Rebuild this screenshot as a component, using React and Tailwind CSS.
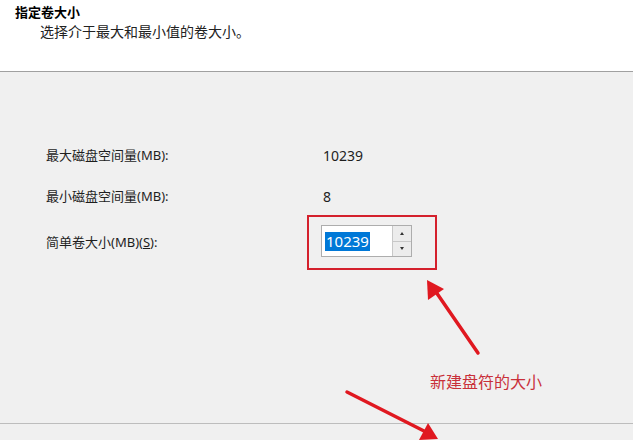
import React from "react";

const font = { fontFamily: '"Noto Sans", "Noto Sans CJK SC", sans-serif' };

const Row = ({ label, children, labelWidth = "w-[277px]", className = "" }) => (
  <div className={`flex items-center ${className}`}>
    <div className={`${labelWidth} shrink-0 text-[13px] text-[#1e1e1e]`}>{label}</div>
    {children}
  </div>
);

const Spinner = () => (
  <div className="flex h-[32px] w-[91px] border border-[#adadad] bg-white">
    <div className="flex flex-1 items-center pl-[3px]">
      <span className="bg-[#0078d7] px-[1px] text-[15px] leading-[19px] text-white">10239</span>
    </div>
    <div className="flex w-[19px] flex-col border-l border-[#c8c8c8]">
      <button className="flex flex-1 items-center justify-center border-b border-[#c8c8c8] bg-[#ececec]">
        <span className="h-0 w-0 border-x-[2.5px] border-b-[3px] border-x-transparent border-b-[#333]" />
      </button>
      <button className="flex flex-1 items-center justify-center bg-[#ececec]">
        <span className="h-0 w-0 border-x-[2.5px] border-t-[3px] border-x-transparent border-t-[#333]" />
      </button>
    </div>
  </div>
);

export default function App() {
  return (
    <div className="relative h-[440px] w-[633px] overflow-hidden bg-[#f0f0f0]" style={font}>
      <div className="h-[72px] border-b border-[#a0a0a0] bg-white pl-[15px] pt-[3px]">
        <div className="text-[13px] font-bold leading-[18px] text-black">指定卷大小</div>
        <div className="pl-[25px] pt-[1px] text-[14px] leading-[20px] text-[#222]">选择介于最大和最小值的卷大小。</div>
      </div>

      <div className="h-[352px] border-b border-[#bdbdbd] pl-[46px] pt-[74px]">
        <Row label="最大磁盘空间量(MB):">
          <span className="text-[14px] leading-[20px] text-[#1e1e1e]">10239</span>
        </Row>
        <Row label="最小磁盘空间量(MB):" className="mt-[21px]">
          <span className="text-[14px] leading-[20px] text-[#1e1e1e]">8</span>
        </Row>
        <Row
          label={<span>简单卷大小(MB)(<span className="underline">S</span>):</span>}
          labelWidth="w-[261px]"
          className="mt-[8px]"
        >
          <div className="h-[55px] w-[130px] border-2 border-[#d4202c] pl-[12px] pt-[8px]">
            <Spinner />
          </div>
        </Row>
      </div>

      <div className="absolute left-[430px] top-[371px] text-[16px] leading-[22px] text-[#c9303a]">
        新建盘符的大小
      </div>

      <svg className="pointer-events-none absolute inset-0" width="633" height="440" viewBox="0 0 633 440">
        <line x1="478" y1="353" x2="436" y2="292" stroke="#e01820" strokeWidth="3.5" strokeLinecap="round" />
        <polygon points="427,280 428,300 444,289" fill="#e01820" />
        <line x1="347" y1="392" x2="424" y2="431" stroke="#e01820" strokeWidth="3.5" strokeLinecap="round" />
        <polygon points="438,439 419,440 428,423" fill="#e01820" />
      </svg>
    </div>
  );
}
